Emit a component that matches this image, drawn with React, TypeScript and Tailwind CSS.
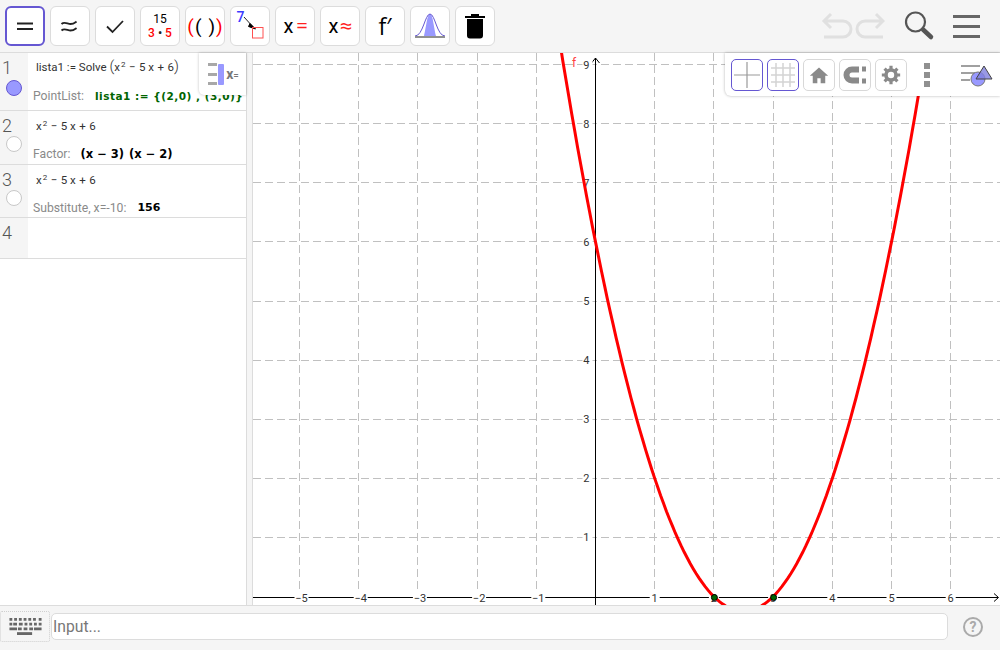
import type { ReactNode } from "react";

const UNIT_X = 59.2;
const UNIT_Y = 59.12;
const ORIGIN_X = 342.5;
const ORIGIN_Y = 543.6;
const AXIS_Y = 544.5;

const toX = (x: number) => ORIGIN_X + x * UNIT_X;
const toY = (y: number) => ORIGIN_Y - y * UNIT_Y;
const crisp = (v: number) => Math.floor(v) + 0.5;

const curve = Array.from({ length: 141 }, (_, i) => {
  const x = -1 + i * 0.05;
  return `${toX(x).toFixed(1)},${toY((x - 2) * (x - 3)).toFixed(1)}`;
}).join(" ");

const ToolButton = ({ active, children }: { active?: boolean; children: ReactNode }) => (
  <button
    className={`flex h-10 w-10 shrink-0 items-center justify-center rounded-[6px] bg-white ${
      active ? "border-2 border-[#6557d2]" : "border border-[#dcdcdc]"
    }`}
  >
    {children}
  </button>
);

const StyleButton = ({ active, children }: { active?: boolean; children: ReactNode }) => (
  <button
    className={`flex h-8 w-8 shrink-0 items-center justify-center rounded-[5px] bg-white border ${
      active ? "border-[#6557d2]" : "border-[#d8d8d8]"
    }`}
  >
    {children}
  </button>
);

const Sup = ({ children }: { children: ReactNode }) => (
  <span className="relative top-[-4px] ml-[1px] text-[8px]">{children}</span>
);

const Row = ({
  num,
  height,
  marble,
  children,
}: {
  num: number;
  height: string;
  marble?: string;
  children?: ReactNode;
}) => (
  <div className={`flex border-b border-[#dcdcdc] ${height}`}>
    <div className="flex w-7 shrink-0 flex-col bg-[#f5f5f5] pl-[2px]">
      <span className="mt-[5px] text-[18px] font-light leading-[20px] text-[#555]">{num}</span>
      {marble && <span className={`ml-[4px] h-4 w-4 rounded-full border ${marble}`} />}
    </div>
    <div className="min-w-0 flex-1 whitespace-nowrap">{children}</div>
  </div>
);

const Formula = ({ top, children }: { top: string; children: ReactNode }) => (
  <div className={`ml-2 h-[22px] text-[11.5px] leading-[16px] text-[#333] ${top}`}>{children}</div>
);

const Output = ({ label, top, children }: { label: string; top: string; children: ReactNode }) => (
  <div className={`ml-[5px] flex items-center text-[12.2px] leading-[16px] ${top}`}>
    <span className="text-[#8a8a8a]">{label}</span>
    {children}
  </div>
);

const Quadratic = () => (
  <>
    x<Sup>2</Sup>
    <span className="mx-[3.5px]">−</span>5 x<span className="mx-[3.5px]">+</span>6
  </>
);

const Graph = () => (
  <svg className="block h-full w-full" viewBox="0 0 747 552" style={{ fontFamily: "Roboto, sans-serif" }}>
    <g stroke="#c0c0c0" strokeDasharray="8 4" strokeWidth="1">
      {[-5, -4, -3, -2, -1, 1, 2, 3, 4, 5, 6].map((n) => (
        <line key={n} x1={crisp(toX(n))} x2={crisp(toX(n))} y1="0" y2="552" />
      ))}
      {[1, 2, 3, 4, 5, 6, 7, 8, 9].map((n) => (
        <line key={n} x1="0" x2="747" y1={crisp(toY(n))} y2={crisp(toY(n))} />
      ))}
    </g>
    <line x1="0" x2="745" y1={AXIS_Y} y2={AXIS_Y} stroke="#000" />
    <line x1={ORIGIN_X} x2={ORIGIN_X} y1="5" y2="552" stroke="#000" />
    <path d="M338.5 10 342.5 5 346.500 10" fill="none" stroke="#000" />
    <path d="M741 540.500 745.500 544.500 741 548.500" fill="none" stroke="#000" />
    {[-5, -4, -3, -2, -1, 1, 2, 3, 4, 5, 6].map((n) => (
      <g key={n}>
        <rect x={toX(n) - 5} y={AXIS_Y - 6} width={n < 0 ? 14 : 10} height="12" fill="#fff" />
        <text x={toX(n) + (n < 0 ? 2 : 0)} y={AXIS_Y + 4} textAnchor="middle" fontSize="11" fill="#333">
          {n < 0 ? `\u2212${-n}` : n}
        </text>
      </g>
    ))}
    {[1, 2, 3, 4, 5, 6, 7, 8, 9].map((n) => (
      <g key={n}>
        <rect x={ORIGIN_X - 13} y={toY(n) - 6} width="10" height="12" fill="#fff" />
        <text x={ORIGIN_X - 6} y={toY(n) + 4} textAnchor="end" fontSize="11" fill="#333">
          {n}
        </text>
      </g>
    ))}
    <polyline points={curve} fill="none" stroke="#ff0000" strokeWidth="3" />
    <text x="319" y="14" fontSize="12" fill="#ff4040">
      f
    </text>
    {[2, 3].map((n) => (
      <circle key={n} cx={toX(n) + 0.5} cy={AXIS_Y} r="3" fill="#006400" stroke="#000" />
    ))}
  </svg>
);

export default function App() {
  return (
    <div
      className="flex h-[650px] w-[1000px] flex-col overflow-hidden bg-white text-black"
      style={{ fontFamily: "Roboto, 'Liberation Sans', sans-serif" }}
    >
      {/* top toolbar */}
      <div className="flex h-[53px] shrink-0 items-center gap-[5px] border-b border-[#dcdcdc] bg-[#f5f5f5] pl-[5px]">
        <ToolButton active>
          <svg width="24" height="24" viewBox="0 0 24 24" stroke="#222" strokeWidth="1.800">
            <path d="M4 9.500h16M4 15h16" />
          </svg>
        </ToolButton>
        <ToolButton>
          <svg width="24" height="24" viewBox="0 0 24 24" fill="none" stroke="#222" strokeWidth="1.800">
            <path d="M3.500 10c3-3 6 0 9 0s4-1 6-2.500M3.500 16.500c3-3 6 0 9 0s4-1 6-2.500" />
          </svg>
        </ToolButton>
        <ToolButton>
          <svg width="24" height="24" viewBox="0 0 24 24" fill="none" stroke="#222" strokeWidth="1.800">
            <path d="M4 12.500 9.500 18 20 7" />
          </svg>
        </ToolButton>
        <ToolButton>
          <div className="flex flex-col items-center text-[12px] leading-[14px]">
            <span>15</span>
            <span className="font-medium text-[#ff0000]">
              3 <span className="text-[#222]">•</span> 5
            </span>
          </div>
        </ToolButton>
        <ToolButton>
          <span className="text-[19px] leading-none">
            <span className="text-[#ff0000]">(</span>
            <span className="ml-[1px]">(</span>
            <span className="ml-[7px]">)</span>
            <span className="ml-[1px] text-[#ff0000]">)</span>
          </span>
        </ToolButton>
        <ToolButton>
          <svg width="38" height="38" viewBox="0 0 38 38" fill="none">
            <text x="5.500" y="15" fontSize="14" fontWeight="500" fill="#3b3bff">
              7
            </text>
            <path d="M13 10 23 21" stroke="#222" />
            <path d="M19 16.500 24.500 22 17.500 19.500Z" fill="#000" stroke="#000" />
            <rect x="21.500" y="20.500" width="10.500" height="10.500" stroke="#ff5050" />
          </svg>
        </ToolButton>
        <ToolButton>
          <span className="flex items-center gap-[3px] text-[20px] leading-none">
            x<span className="text-[18px] text-[#ff2020]" style={{ transform: "scaleX(1.250)" }}>=</span>
          </span>
        </ToolButton>
        <ToolButton>
          <span className="flex items-center gap-[3px] text-[20px] leading-none">
            x<span className="text-[18px] text-[#ff2020]" style={{ transform: "scaleX(1.250)" }}>≈</span>
          </span>
        </ToolButton>
        <ToolButton>
          <span className="text-[23px] leading-none" style={{ fontFamily: "'Open Sans', sans-serif" }}>
            f′
          </span>
        </ToolButton>
        <ToolButton>
          <svg width="36" height="36" viewBox="0 0 36 36">
            <path d="M12 28C14 21 15 6 18 6s4 15 6 22Z" fill="#9999ff" />
            <path d="M3 28C11 28 13 6 18 6s7 22 15 22" fill="none" stroke="#6557d2" />
            <rect x="3" y="28" width="30" height="2" fill="#909090" />
          </svg>
        </ToolButton>
        <ToolButton>
          <svg width="24" height="30" viewBox="0 0 24 30">
            <path d="M2 5h20v2H2zM8 3h8v2H8zM4 8h16v16.500a3 3 0 0 1-3 3H7a3 3 0 0 1-3-3Z" fill="#000" />
          </svg>
        </ToolButton>

        <div className="ml-auto flex items-center pr-[20px]">
          <svg width="65" height="30" viewBox="0 0 65 30" fill="none" stroke="#e0e0e0" strokeWidth="3">
            <path d="M6 10h17a8 8 0 0 1 0 16H4M11 3 4 10l7 7" />
            <path d="M63 10H45a8 8 0 0 0 0 16h18M56 3l7 7-7 7" />
          </svg>
          <svg className="ml-[18px]" width="32" height="32" viewBox="0 0 32 32" fill="none">
            <circle cx="12.500" cy="12" r="9.500" stroke="#555" strokeWidth="2.200" />
            <path d="M20 19.500 28 27" stroke="#555" strokeWidth="4.500" strokeLinecap="round" />
          </svg>
          <div className="ml-[18px] flex w-[27px] flex-col gap-[7px]">
            <div className="h-[3px] bg-[#666]" />
            <div className="h-[3px] bg-[#666]" />
            <div className="h-[3px] bg-[#666]" />
          </div>
        </div>
      </div>

      <div className="flex min-h-0 flex-1">
        {/* algebra view */}
        <div className="relative w-[247px] shrink-0 border-r border-[#dcdcdc]">
          <Row num={1} height="h-[58px]" marble="mt-[2px] border-[#6557d2] bg-[#9999ff]">
            <Formula top="mt-[6px]">
              lista1 := Solve <span className="text-[15px] font-light leading-none">(</span>
              <Quadratic />
              <span className="text-[15px] font-light leading-none">)</span>
            </Formula>
            <Output label="PointList:" top="mt-[7px]">
              <span
                className="ml-[11px] text-[10.500px] font-bold tracking-[0.5px] text-[#006400]"
                style={{ fontFamily: "'DejaVu Sans', sans-serif" }}
              >
                lista1 := {"{(2,0) , (3,0)}"}
              </span>
            </Output>
          </Row>
          <Row num={2} height="h-[54px]" marble="mt-0 border-[#c8c8c8] bg-white">
            <Formula top="mt-[7px]">
              <Quadratic />
            </Formula>
            <Output label="Factor:" top="mt-[6px]">
              <span
                className="ml-[10px] text-[11.500px] font-bold"
                style={{ fontFamily: "'DejaVu Sans', sans-serif" }}
              >
                (x − 3)
                <span className="ml-[5px]">(x − 2)</span>
              </span>
            </Output>
          </Row>
          <Row num={3} height="h-[53px]" marble="mt-0 border-[#c8c8c8] bg-white">
            <Formula top="mt-[7px]">
              <Quadratic />
            </Formula>
            <Output label="Substitute, x=-10:" top="mt-[6px]">
              <span
                className="ml-[11px] text-[11px] font-bold"
                style={{ fontFamily: "'DejaVu Sans', sans-serif" }}
              >
                156
              </span>
            </Output>
          </Row>
          <Row num={4} height="h-[41px]" />

          {/* algebra style bar toggle */}
          <div className="absolute right-0 top-0 flex h-[42px] w-[47px] items-center justify-center gap-[1px] rounded-bl-[5px] bg-white pl-[2px] shadow-[0_0_3px_rgba(0,0,0,0.25)]">
            <div className="flex h-[22px] flex-col justify-between">
              <div className="h-[3px] w-[9px] bg-[#a8a8a8]" />
              <div className="h-[3px] w-[9px] bg-[#a8a8a8]" />
              <div className="h-[3px] w-[9px] bg-[#a8a8a8]" />
            </div>
            <div className="h-[21px] w-[6px] rounded-[1px] bg-[#9999ff]" />
            <span className="ml-[1px] text-[14px] font-bold leading-none text-[#777]">
              x<span className="text-[10px] font-normal">=</span>
            </span>
          </div>
        </div>

        {/* splitter */}
        <div className="w-[6px] shrink-0 border-r border-[#dcdcdc] bg-[#f5f5f5]" />

        {/* graphics view */}
        <div className="relative min-w-0 flex-1">
          <Graph />
          <div className="absolute right-0 top-0 flex h-[43px] w-[275px] items-center rounded-bl-[6px] bg-white pl-[6px] shadow-[0_0_3px_rgba(0,0,0,0.3)]">
            <div className="flex gap-1">
              <StyleButton active>
                <svg width="30" height="30" viewBox="0 0 30 30" stroke="#9a9a9a" strokeWidth="1.200">
                  <path d="M2 15h26M15 2v26" />
                </svg>
              </StyleButton>
              <StyleButton active>
                <svg width="30" height="30" viewBox="0 0 30 30" stroke="#d4d4d4" strokeWidth="1.500">
                  <path d="M3 8h24M3 15h24M3 22h24M8 3v24M15 3v24M22 3v24" />
                </svg>
              </StyleButton>
              <StyleButton>
                <svg width="20" height="20" viewBox="0 0 24 24" fill="#8a8a8a">
                  <path d="M12 3 1 13h3.500v9h5.500v-6h4v6h5.500v-9H23Z" />
                </svg>
              </StyleButton>
              <StyleButton>
                <svg width="26" height="22" viewBox="0 0 26 22" fill="none">
                  <path d="M17 5.500h-7a5.500 5.500 0 0 0 0 11h7" stroke="#8a8a8a" strokeWidth="6" />
                  <path d="M20 2.500h4v5h-4zM20 14.500h4v5h-4z" fill="#8a8a8a" />
                </svg>
              </StyleButton>
              <StyleButton>
                <svg width="22" height="22" viewBox="0 0 24 24" fill="none" stroke="#8a8a8a">
                  <circle cx="12" cy="12" r="5.500" strokeWidth="4" />
                  <path d="M12 2v4M12 18v4M2 12h4M18 12h4M5 5l3 3M16 16l3 3M5 19l3-3M16 8l3-3" strokeWidth="3.500" />
                </svg>
              </StyleButton>
            </div>
            <div className="ml-[17px] flex flex-col gap-[3px]">
              <div className="h-[6px] w-[6px] bg-[#909090]" />
              <div className="h-[6px] w-[6px] bg-[#909090]" />
              <div className="h-[6px] w-[6px] bg-[#909090]" />
            </div>
            <svg className="ml-[30px]" width="34" height="28" viewBox="0 0 34 28">
              <path d="M1 5h19M1 12h14M1 19h9" stroke="#a0a0a0" strokeWidth="2" />
              <circle cx="18" cy="18" r="7" fill="#9999ff" stroke="#777" />
              <path d="M16 18 24 5l8 13Z" fill="#7f7fdd" fillOpacity="0.8" stroke="#444" />
            </svg>
          </div>
        </div>
      </div>

      {/* input bar */}
      <div className="flex h-[45px] shrink-0 items-center border-t border-[#dcdcdc] bg-[#f5f5f5] pb-[3px]">
        <button className="flex h-[31px] w-[50px] shrink-0 items-center justify-center rounded-[2px] border border-dotted border-[#cfcfcf] bg-[#f5f5f5]">
          <svg width="33" height="17" viewBox="0 0 34 18" fill="#666">
            <path d="M0 0h3v3H0zM5 0h3v3H5zM10 0h3v3h-3zM15 0h3v3h-3zM20 0h3v3h-3zM25 0h3v3h-3zM31 0h3v3h-3z" />
            <path d="M0 5h3v3H0zM4 5h4v3H4zM10 5h4v3h-4zM16 5h3v3h-3zM21 5h3v3h-3zM26 5h3v3h-3zM31 5h3v3h-3z" />
            <path d="M0 10h8v3H0zM9 10h4v3H9zM15 10h4v3h-4zM21 10h4v3h-4zM26 10h8v3h-8z" />
            <path d="M8 15h16v3H8z" />
          </svg>
        </button>
        <div className="ml-px flex h-[27px] w-[897px] items-center rounded-[5px] border border-[#dcdcdc] bg-white pl-[1px] text-[15.700px] text-[#777]">
          Input...
        </div>
        <div className="ml-[15px] flex h-5 w-5 items-center justify-center rounded-full border-2 border-[#aaa] text-[14px] font-bold leading-none text-[#aaa]">
          ?
        </div>
      </div>
    </div>
  );
}
